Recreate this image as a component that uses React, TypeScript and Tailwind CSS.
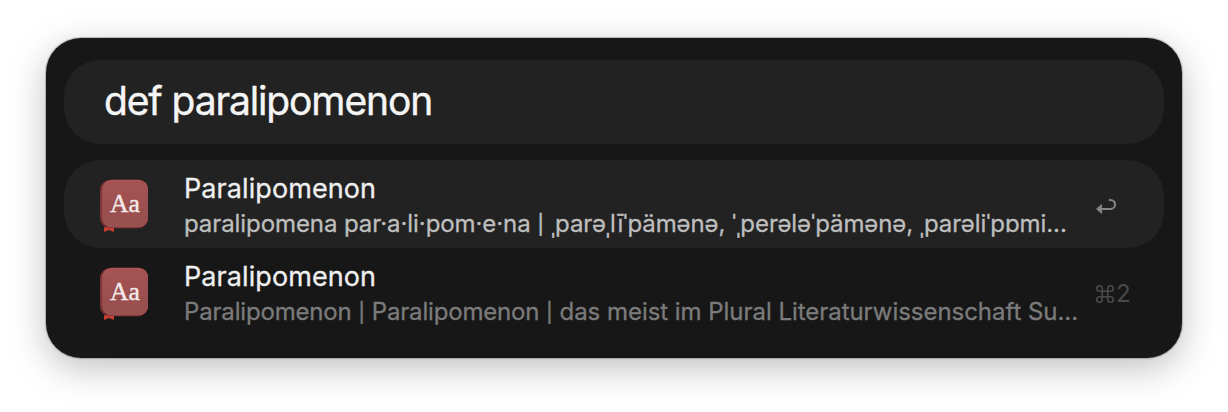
import React from "react";

function DictionaryIcon({ id }: { id: string }) {
  return (
    <svg width="60" height="60" viewBox="0 0 60 60" className="block shrink-0" aria-hidden="true">
      <defs>
        <linearGradient id={id} x1="0" y1="0" x2="0" y2="1">
          <stop offset="0" stopColor="#a65353" />
          <stop offset="0.6" stopColor="#9b4f4f" />
          <stop offset="1" stopColor="#965150" />
        </linearGradient>
      </defs>
      <rect x="6" y="6.500" width="48" height="48" rx="10" fill="#5b2423" />
      <rect x="6" y="6" width="47" height="47.500" rx="10" fill="#7d3535" />
      <path d="M10 53v5l5-2 5 2v-4z" fill="#c43f31" />
      <rect x="8.500" y="5.700" width="45.500" height="47.500" rx="9.500" fill="#b65858" />
      <rect x="8.500" y="6.500" width="45.500" height="46.700" rx="9" fill={`url(#${id})`} />
      <text
        x="16"
        y="37.500"
        textLength="30"
        lengthAdjust="spacingAndGlyphs"
        fill="#f3e9e8"
        stroke="#f3e9e8"
        strokeWidth="0.4"
        className="font-['Liberation_Serif',serif] text-[26px]"
      >
        Aa
      </text>
    </svg>
  );
}

function ReturnIcon() {
  return (
    <svg width="22" height="20" viewBox="0 0 22 20" className="block" fill="none" aria-hidden="true">
      <path
        d="M5 13H15.500a4.500 4.500 0 0 0 0-9.100H14.600"
        stroke="#858585"
        strokeWidth="2"
        strokeLinecap="round"
      />
      <path d="M1.500 13L6.600 8.500v9z" fill="#858585" stroke="#858585" strokeWidth="0.8" strokeLinejoin="round" />
    </svg>
  );
}

function CommandIcon() {
  return (
    <svg width="22" height="22" viewBox="0 0 24 24" className="block" fill="none" stroke="#4a4a4a" strokeWidth="1.800" aria-hidden="true">
      <path d="M15 6v12a3 3 0 1 0 3-3H6a3 3 0 1 0 3 3V6a3 3 0 1 0-3 3h12a3 3 0 1 0-3-3" />
    </svg>
  );
}

function Pipe() {
  return <span className="inline-block w-[7px] text-center align-[1px] text-[19px] leading-none tracking-normal [-webkit-text-stroke:0.6px_currentColor]">|</span>;
}

export default function App() {
  return (
    <div className="flex h-[412px] w-[1228px] bg-white px-[46px] pt-[38px] font-['Inter',sans-serif]">
      <main className="h-[320px] w-[1136px] rounded-[35px] bg-[#171717] px-[18px] pt-[22px] shadow-[0_0_1px_1px_rgba(0,0,0,0.22),0_10px_36px_rgba(0,0,0,0.25)]">
        <div className="flex h-[84px] items-center rounded-[36px] bg-[#222222] pl-10">
          <span className="whitespace-pre pb-0.5 text-[39px] leading-[48px] tracking-[-1.13px] text-[#f5f5f5] [-webkit-text-stroke:0.4px_#f5f5f5]">def paralipomenon</span>
        </div>
        <ul className="mt-4">
          <li className="flex h-[88px] rounded-[36px] bg-[#222222] pl-[30px] pt-[14px]">
            <DictionaryIcon id="cover-first" />
            <div className="ml-[30px] w-[911px] whitespace-pre">
              <div className="h-[33px] text-[27px] leading-[30px] tracking-[0.08px] text-[#efefef] [-webkit-text-stroke:0.3px_#efefef]">Paralipomenon</div>
              <div className="h-[34px] text-[24px] leading-[34px] tracking-[-0.08px] text-[#bebebe] [-webkit-text-stroke:0.3px_#bebebe]">
                paralipomena par·a·li·pom·e·na <Pipe /> ˌparəˌlīˈpämənə, ˈˌperələˈpämənə, ˌparəliˈpɒmi...
              </div>
            </div>
            <div className="mt-[22px]">
              <ReturnIcon />
            </div>
          </li>
          <li className="flex h-[88px] pl-[30px] pt-[14px]">
            <DictionaryIcon id="cover-second" />
            <div className="ml-[30px] w-[910px] whitespace-pre">
              <div className="h-[33px] text-[27px] leading-[30px] tracking-[0.08px] text-[#efefef] [-webkit-text-stroke:0.3px_#efefef]">Paralipomenon</div>
              <div className="h-[34px] text-[24px] leading-[34px] tracking-[-0.04px] text-[#7b7b7b] [-webkit-text-stroke:0.3px_#7b7b7b]">
                <span className="tracking-[-0.17px]">Paralipomenon <Pipe /> Paralipomenon <Pipe /> </span>das meist im Plural Literaturwissenschaft Su...
              </div>
            </div>
            <div className="mt-[20px] flex h-6 items-center text-[24px] leading-6 text-[#4a4a4a]">
              <CommandIcon />
              <span>2</span>
            </div>
          </li>
        </ul>
      </main>
    </div>
  );
}
